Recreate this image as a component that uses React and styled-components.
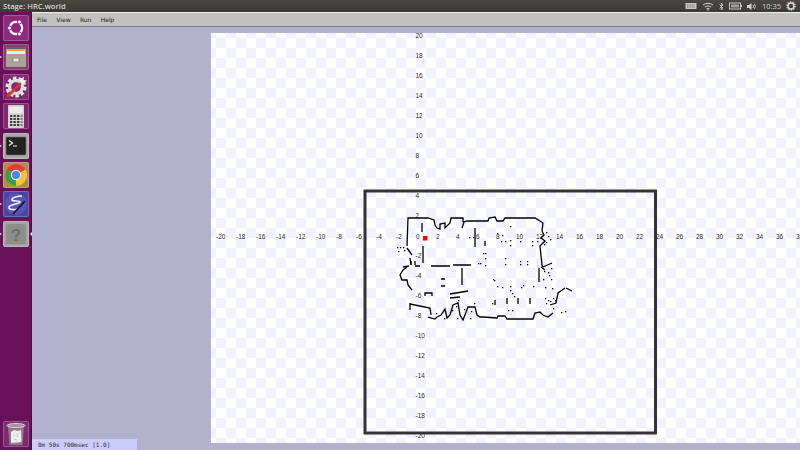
import React from "react";
import styled, { createGlobalStyle } from "styled-components";

const GlobalStyle = createGlobalStyle`
  html, body { margin: 0; padding: 0; background: #b2b2cf; overflow: hidden; }
`;

const Screen = styled.div`
  width: 800px;
  height: 450px;
  display: flex;
  flex-direction: column;
  overflow: hidden;
`;

const TopBar = styled.div`
  height: 12px;
  flex: none;
  display: flex;
  align-items: center;
  justify-content: space-between;
  background: linear-gradient(#4a4843, #3a3935);
  padding: 0 3px;
`;

const Title = styled.span`
  font: 600 7.6px "Open Sans", sans-serif;
  color: #d8d6cf;
`;

const Indicators = styled.div`
  display: flex;
  align-items: center;
  gap: 5px;
  margin-right: 1px;
`;

const Clock = styled.span`
  font: 7.5px "Open Sans", sans-serif;
  color: #d8d6cf;
`;

const Body = styled.div`
  flex: 1;
  display: flex;
  min-height: 0;
`;

const Launcher = styled.div`
  width: 32px;
  flex: none;
  display: flex;
  flex-direction: column;
  align-items: center;
  gap: 3.4px;
  padding: 3px 0;
  box-sizing: border-box;
  background: #69105a;
  border-right: 1px solid #4d0c42;
`;

const LauncherItem = styled.div`
  position: relative;
  width: 26px;
  height: 26px;
  flex: none;
  margin-top: ${(p) => p.$push || 0}px;
`;

const Tile = styled.div`
  width: 26px;
  height: 26px;
  border-radius: 2px;
  background: ${(p) => p.$bg};
  box-shadow: inset 0 0 0 1px rgba(255, 255, 255, 0.22);
  overflow: hidden;
`;

const Pip = styled.span`
  position: absolute;
  top: 12px;
  left: -3px;
  width: 0;
  height: 0;
  border-top: 1.5px solid transparent;
  border-bottom: 1.5px solid transparent;
  border-left: 2px solid #f2f2f2;
`;

const ActivePip = styled.span`
  position: absolute;
  top: 11.5px;
  right: -3px;
  width: 0;
  height: 0;
  border-top: 2px solid transparent;
  border-bottom: 2px solid transparent;
  border-right: 2.5px solid #f2f2f2;
`;

const Main = styled.div`
  flex: 1;
  min-width: 0;
  display: flex;
  flex-direction: column;
  position: relative;
`;

const MenuBar = styled.div`
  height: 13px;
  flex: none;
  display: flex;
  align-items: center;
  gap: 9.3px;
  padding-left: 5px;
  background: #c1c1c1;
  border-top: 1px solid #eeeeee;
  border-bottom: 1px solid #77777c;
`;

const MenuItem = styled.span`
  font: 6px "DejaVu Sans", sans-serif;
  color: #222;
`;

const Stage = styled.div`
  flex: 1;
  min-height: 0;
  padding: 6px 0 7px 179px;
  display: flex;
  background: #b2b2cf;
`;

const Canvas = styled.div`
  flex: 1;
  background-color: #ffffff;
  background-image: conic-gradient(#f2f2ff 25%, #ffffff 0 50%, #f2f2ff 0 75%, #ffffff 0);
  background-size: 20px 20px;
  background-position: 15px 5px;
`;

const MapSvg = styled.svg`
  display: block;
  width: 589px;
  height: 410px;
`;

const Status = styled.div`
  position: absolute;
  left: 0;
  bottom: 0;
  width: 105px;
  height: 11px;
  background: #ccccff;
  font: 6px "DejaVu Sans Mono", monospace;
  line-height: 12px;
  color: #222;
  padding-left: 6px;
  box-sizing: border-box;
`;

const Icon = ({ children, w = 26, h = 26 }) => (
  <svg width={w} height={h} viewBox={`0 0 ${w} ${h}`} style={{ display: "block" }}>
    {children}
  </svg>
);

const UbuntuIcon = () => (
  <Icon>
    <circle cx="13" cy="13" r="6.2" fill="none" stroke="#fff" strokeWidth="2.2" />
    <circle cx="6.5" cy="13" r="2" fill="#fff" stroke="#8d2a7d" />
    <circle cx="16.5" cy="7" r="2" fill="#fff" stroke="#8d2a7d" />
    <circle cx="16.5" cy="19" r="2" fill="#fff" stroke="#8d2a7d" />
  </Icon>
);

const FilesIcon = () => (
  <Icon>
    <rect x="3" y="3" width="20" height="20" rx="1" fill="#a8a49c" />
    <rect x="3" y="3" width="20" height="2" fill="#6d655a" />
    <rect x="4" y="5" width="18" height="2" fill="#eda04c" />
    <rect x="4" y="7" width="18" height="3" fill="#f3efe8" />
    <rect x="10" y="14" width="6" height="4" rx="0.5" fill="#e8e6e2" stroke="#77736c" strokeWidth="0.7" />
  </Icon>
);

const SettingsIcon = () => (
  <Icon>
    <circle cx="13" cy="13" r="9" fill="none" stroke="#e8e8e8" strokeWidth="3" strokeDasharray="3.4 2.2" />
    <circle cx="13" cy="13" r="6.5" fill="none" stroke="#dcdcdc" strokeWidth="3.4" />
    <path d="M5 22 L17 10" stroke="#d03a34" strokeWidth="2.8" strokeLinecap="round" />
    <path d="M16.5 6 L21 2.5 L20.5 6 L24 6.5 L19.5 10.5 Z" fill="#f4f4f4" />
  </Icon>
);

const CalcIcon = () => (
  <Icon>
    <rect x="5" y="2" width="16" height="23" rx="1" fill="#d3d3d0" />
    <rect x="6.5" y="4" width="13" height="6" fill="#eeeeea" />
    {[12, 15, 18, 21].map((y) =>
      [7, 10.5, 14, 17.5].map((x) => (
        <rect key={`${x}-${y}`} x={x} y={y} width="2.3" height="2" fill={x > 17 ? "#8a8a86" : "#3b3b3b"} />
      ))
    )}
  </Icon>
);

const TerminalIcon = () => (
  <Icon>
    <rect x="3" y="4" width="20" height="18" rx="1" fill="#222" stroke="#6e6e6e" strokeWidth="0.6" />
    <path d="M6 7.5 L9.5 10 L6 12.5" fill="none" stroke="#f2f2f2" strokeWidth="1.2" />
    <path d="M10 13 H14" stroke="#f2f2f2" strokeWidth="1.2" />
  </Icon>
);

const ChromeIcon = () => (
  <Icon>
    <circle cx="13" cy="13" r="11" fill="#f0c437" />
    <path d="M13 13 L3.5 7.5 A11 11 0 0 1 22.5 7.5 Z" fill="#d9433a" />
    <path d="M13 13 L3.5 7.5 A11 11 0 0 0 13 24 Z" fill="#3f9c4c" />
    <circle cx="13" cy="13" r="5.2" fill="#eee" />
    <circle cx="13" cy="13" r="4" fill="#4a86e0" />
  </Icon>
);

const EmacsIcon = () => (
  <Icon>
    <circle cx="13" cy="13" r="11" fill="#5b53b8" />
    <path d="M19 5 C14 5 8 7 9 9 C10 11 17 9 17 11 C17 13 7 13 6 16 C5 19 12 19 15 18" fill="none" stroke="#f2f0fa" strokeWidth="1.7" />
    <path d="M10 23 L22 10" stroke="#16162e" strokeWidth="1.8" />
  </Icon>
);

const UnknownIcon = () => (
  <Icon>
    <rect x="3" y="3" width="20" height="20" rx="2" fill="#8e8e8c" />
    <text x="13" y="20" textAnchor="middle" fontFamily="Liberation Sans, sans-serif" fontSize="17" fontWeight="700" fill="#6d6d6b">?</text>
  </Icon>
);

const TrashIcon = () => (
  <Icon>
    <path d="M5 5 H21 L19.5 24 H6.5 Z" fill="#8f7a88" />
    <ellipse cx="13" cy="4.5" rx="9" ry="2" fill="#a58e9e" stroke="#d9d5d8" strokeWidth="1" />
    <path d="M8 11 L11 9 L15 10 L18 9 L18.5 21 L8 22 Z" fill="#eeeeee" />
    <path d="M10 13 L12 15 M15 12 L14 16 M11 18 L14 19" stroke="#b9b3b7" strokeWidth="0.8" />
  </Icon>
);

const PanelKeyboard = () => (
  <Icon w={12} h={8}>
    <rect x="0.5" y="1" width="11" height="6" rx="0.5" fill="#c9c7c0" />
    <path d="M2 3 H10 M2 5 H10" stroke="#4a4843" strokeWidth="0.7" strokeDasharray="1 0.6" />
  </Icon>
);

const PanelWifi = () => (
  <Icon w={12} h={9}>
    <path d="M1 3 Q6 -0.5 11 3 M2.8 5 Q6 2.6 9.2 5 M4.5 6.8 Q6 5.8 7.5 6.8" fill="none" stroke="#d8d6cf" strokeWidth="1" />
    <circle cx="6" cy="8" r="0.8" fill="#d8d6cf" />
  </Icon>
);

const PanelBluetooth = () => (
  <Icon w={5} h={9}>
    <path d="M0.5 2.5 L4 6 L2.3 8 V1 L4 3 L0.5 6.5" fill="none" stroke="#d8d6cf" strokeWidth="0.8" />
  </Icon>
);

const PanelBattery = () => (
  <Icon w={13} h={8}>
    <rect x="0.5" y="1" width="11" height="6" fill="none" stroke="#c9c7c0" />
    <rect x="2" y="2.5" width="8" height="3" fill="#a5a39c" />
    <rect x="11.5" y="3" width="1.5" height="2" fill="#c9c7c0" />
  </Icon>
);

const PanelSound = () => (
  <Icon w={10} h={9}>
    <path d="M0 3 H2 L4.5 1 V8 L2 6 H0 Z" fill="#d8d6cf" />
    <path d="M6 3 Q7 4.5 6 6 M7.5 2 Q9 4.5 7.5 7" fill="none" stroke="#d8d6cf" strokeWidth="0.9" />
  </Icon>
);

const PanelGear = () => (
  <Icon w={10} h={10}>
    <circle cx="5" cy="5" r="3" fill="none" stroke="#d8d6cf" strokeWidth="1.6" />
    <circle cx="5" cy="5" r="4.2" fill="none" stroke="#d8d6cf" strokeWidth="1.2" strokeDasharray="1.3 1.3" />
  </Icon>
);

// tick labels run every 2 units, 10px per unit, origin near 416,236
const xTicks = [];
for (let v = -20; v <= 38; v += 2) xTicks.push(v);
const yTicks = [];
for (let v = 20; v >= -20; v -= 2) if (v !== 0) yTicks.push(v);

// occupancy outline, traced in screen coordinates
const walls = [
  "M407 246 L408 218 L428 218 L434 220 L435 225 L437 228 L440 229 L440 224 L445 223 L445 228 L450 223 L451 218 L463 218 L463 222 M462 228 L464 222 L467 221 L488 221 L489 218 L495 217 L497 221 L503 221 L505 218 L528 218 L535 218 L540 221 L543 223 L542 231",
  "M542 231 L544 235 L541 238 L545 241 L540 246 L542 265 L543 267 L552 263",
  "M407 248 L412 255 M410 258 L411 265 M403 267 L409 266 M415 266 L420 266",
  "M407 267 L403 270 L400 275 L402 280 L407 280 L408 285 L412 290",
  "M410 303 L410 310 M410 304 L430 308 L431 315",
  "M428 317 L435 319 L437 317 L441 315 L445 309 L447 318 L450 315 L453 305 L458 303 L460 315 L463 320 L468 307 L475 307 L477 315 L480 317 L483 317 L497 318 L498 316 L505 316 L507 319 L533 319 L535 313 L540 312 L543 315 L548 317 L553 313",
  "M550 305 L556 303 L558 293 L565 288 M566 288 L572 291",
  "M539 268 L539 282 M541 267 L545 270",
  "M422 223 L422 232 M423 246 L423 263",
  "M431 266 L450 266 M453 265 L471 265 M462 268 L462 285 M475 228 L475 247",
  "M450 294 L468 291 M450 298 L460 297 M441 279 L445 279 M441 286 L445 286",
  "M425 296 L425 293 L432 293 L432 296",
  "M485 241 L485 246 M495 300 L495 305 M507 298 L507 304 M518 298 L518 304 M530 298 L530 304",
  "M411 261 L411 265 M415 261 L415 265",
];

// scattered returns inside the room
const specks = [
  [397, 247], [400, 247], [403, 247], [404, 250], [398, 251], [469, 237], [473, 237], [483, 253], [485, 253], [485, 258],
  [478, 263], [480, 263], [485, 265], [505, 264], [505, 258], [497, 233], [502, 235], [501, 241], [505, 241], [510, 240],
  [510, 245], [510, 226], [520, 241], [520, 261], [520, 264], [527, 261], [527, 264], [532, 241], [532, 245], [537, 241],
  [546, 232], [548, 236], [546, 242], [544, 244], [550, 239], [493, 279], [494, 280], [497, 286], [502, 287], [510, 286],
  [521, 287], [523, 285], [533, 286], [510, 290], [512, 293], [514, 296], [545, 287], [552, 288], [492, 303], [544, 271],
  [548, 272], [551, 268], [549, 275], [551, 279], [543, 279], [508, 310], [512, 310], [545, 298], [548, 300], [553, 298],
  [546, 303], [550, 301], [555, 300], [561, 312], [565, 311], [553, 308], [458, 300], [456, 306], [443, 311], [452, 310],
  [464, 309], [471, 311], [474, 303], [444, 318], [457, 318], [470, 318], [436, 313],
];

const StageMap = () => (
  <MapSvg viewBox="211 33 589 410">
    {xTicks.map((v) => (
      <text key={v} x={416 + v * 10} y={238.5} fontFamily="Liberation Sans, sans-serif" fontSize="6.5" fill="#222">
        {v}
      </text>
    ))}
    {yTicks.map((v) => (
      <text key={v} x={415.5} y={238 - v * 10} fontFamily="Liberation Sans, sans-serif" fontSize="6.5" fill="#222">
        {v}
      </text>
    ))}
    <rect x="365" y="191" width="290.5" height="242" fill="none" stroke="#333" strokeWidth="3" />
    {walls.map((d) => (
      <path key={d} d={d} fill="none" stroke="#000" strokeWidth="1.3" />
    ))}
    {specks.map(([x, y]) => (
      <rect key={`${x}-${y}`} x={x} y={y} width="1.3" height="1.3" fill="#000" />
    ))}
    <rect x="423" y="236" width="4.5" height="4.5" fill="#f00" />
  </MapSvg>
);

export default function App() {
  return (
    <Screen>
      <GlobalStyle />
      <TopBar>
        <Title>Stage: HRC.world</Title>
        <Indicators>
          <PanelKeyboard />
          <PanelWifi />
          <PanelBluetooth />
          <PanelBattery />
          <PanelSound />
          <Clock>10:35</Clock>
          <PanelGear />
        </Indicators>
      </TopBar>
      <Body>
        <Launcher>
          <LauncherItem><Tile $bg="#8d2a7d"><UbuntuIcon /></Tile></LauncherItem>
          <LauncherItem><Tile $bg="#8a3a6f"><FilesIcon /></Tile><Pip /></LauncherItem>
          <LauncherItem><Tile $bg="#7f2a72"><SettingsIcon /></Tile></LauncherItem>
          <LauncherItem><Tile $bg="#7f2a72"><CalcIcon /></Tile></LauncherItem>
          <LauncherItem><Tile $bg="#a9a9a6"><TerminalIcon /></Tile><Pip /></LauncherItem>
          <LauncherItem><Tile $bg="#b08a50"><ChromeIcon /></Tile><Pip /></LauncherItem>
          <LauncherItem><Tile $bg="#4a45a0"><EmacsIcon /></Tile><Pip /></LauncherItem>
          <LauncherItem><Tile $bg="#a3a3a1"><UnknownIcon /></Tile><Pip /><ActivePip /></LauncherItem>
          <LauncherItem $push={171}><Tile $bg="#7f2a72"><TrashIcon /></Tile></LauncherItem>
        </Launcher>
        <Main>
          <MenuBar>
            <MenuItem>File</MenuItem>
            <MenuItem>View</MenuItem>
            <MenuItem>Run</MenuItem>
            <MenuItem>Help</MenuItem>
          </MenuBar>
          <Stage>
            <Canvas>
              <StageMap />
            </Canvas>
          </Stage>
          <Status>0m 50s 700msec [1.0]</Status>
        </Main>
      </Body>
    </Screen>
  );
}
